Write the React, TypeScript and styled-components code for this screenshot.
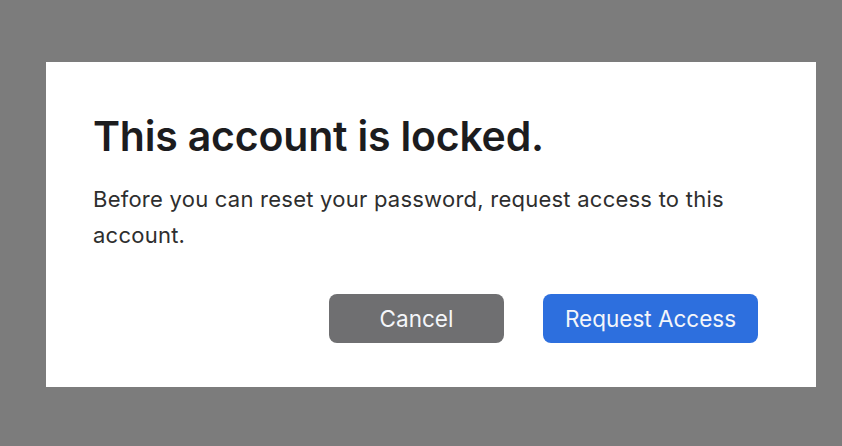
import styled, { createGlobalStyle } from "styled-components"

const GlobalStyle = createGlobalStyle`
  html, body {
    margin: 0;
    padding: 0;
    background: #7c7c7c;
  }
  body {
    font-family: Inter, "Liberation Sans", sans-serif;
  }
`

const Backdrop = styled.div`
  width: 842px;
  height: 446px;
  box-sizing: border-box;
  padding: 62px 0 0 46px;
  background: #7c7c7c;
`

const Dialog = styled.div`
  width: 770px;
  height: 325px;
  box-sizing: border-box;
  padding: 49px 58px 0 47px;
  background: #ffffff;
  display: flex;
  flex-direction: column;
`

const Title = styled.h1`
  margin: 0;
  font-size: 41px;
  line-height: 50px;
  font-weight: 600;
  letter-spacing: -0.2px;
  color: #1c1c1e;
`

const Message = styled.p`
  margin: 20px 0 0;
  font-size: 22px;
  line-height: 36px;
  letter-spacing: 0.24px;
  color: #2e2e2e;
`

const Actions = styled.div`
  display: flex;
  justify-content: flex-end;
  gap: 39px;
  margin-top: 41px;
`

const Button = styled.button<{ $primary?: boolean }>`
  height: 49px;
  width: ${({ $primary }) => ($primary ? "215px" : "175px")};
  border: none;
  border-radius: 8px;
  background: ${({ $primary }) => ($primary ? "#2d6fde" : "#6f6f71")};
  color: #f4f6fa;
  font-family: Inter, "Liberation Sans", sans-serif;
  font-size: 22.5px;
  cursor: pointer;
`

export default function App() {
  return (
    <>
      <GlobalStyle />
      <Backdrop>
        <Dialog>
          <Title>This account is locked.</Title>
          <Message>
            Before you can reset your password, request access to this account.
          </Message>
          <Actions>
            <Button>Cancel</Button>
            <Button $primary>Request Access</Button>
          </Actions>
        </Dialog>
      </Backdrop>
    </>
  )
}
